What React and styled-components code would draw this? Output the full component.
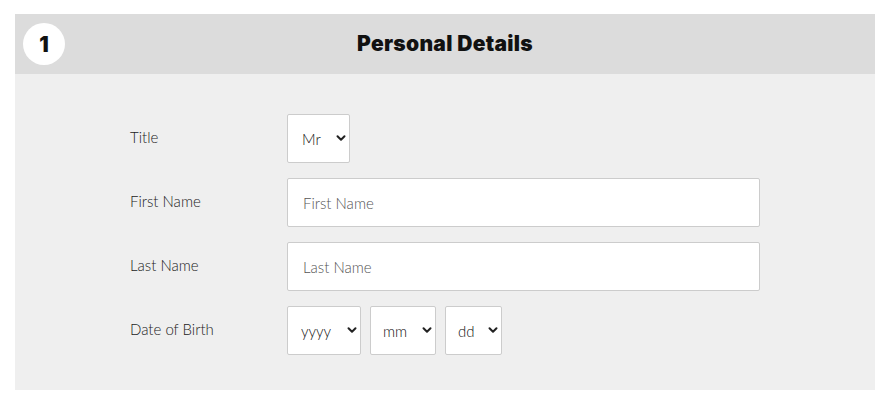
import React from "react"
import styled, { createGlobalStyle } from "styled-components"

const GlobalStyle = createGlobalStyle`
  body {
    margin: 0;
    background: #fff;
    font-family: "Lato", "Open Sans", sans-serif;
  }
`

const Page = styled.div`
  padding: 14px 15px 0;
`

const Section = styled.section`
  width: 860px;
  background-color: #efefef;
`

const Header = styled.header`
  position: relative;
  height: 60px;
  background-color: #dcdcdc;
  display: flex;
  align-items: center;
  justify-content: center;
`

const Step = styled.span`
  position: absolute;
  left: 8px;
  top: 9px;
  width: 42px;
  height: 42px;
  border-radius: 50%;
  background: #fff;
  display: flex;
  align-items: center;
  justify-content: center;
  font-family: "Inter", sans-serif;
  font-size: 21px;
  font-weight: 900;
  color: #111;
`

const Heading = styled.h2`
  margin: 0 0 1px;
  font-family: "Inter", sans-serif;
  font-size: 21px;
  font-weight: 900;
  color: #111;
  letter-spacing: 0.3px;
`

const Body = styled.div`
  padding: 40px 0 35px 115px;
  display: flex;
  flex-direction: column;
  gap: 15px;
`

const Row = styled.div`
  display: flex;
  align-items: center;
  height: 49px;
`

const Label = styled.label`
  width: 157px;
  font-size: 15px;
  font-weight: 300;
  color: #222;
  margin-top: -4px;
`

const Controls = styled.div`
  display: flex;
  gap: 9px;
`

const TextInput = styled.input`
  box-sizing: border-box;
  width: 473px;
  height: 49px;
  padding: 0 15px;
  border: 1px solid #cccccc;
  border-radius: 2px;
  background: #fff;
  font-family: "Lato", sans-serif;
  font-weight: 300;
  font-size: 15px;
  color: #222;
  outline: none;

  &::placeholder {
    color: #555;
  }
`

const SelectWrap = styled.div`
  position: relative;
  width: ${(p) => p.$width}px;
  height: 49px;
`

const Select = styled.select`
  appearance: none;
  box-sizing: border-box;
  width: 100%;
  height: 100%;
  padding: 0 0 0 ${(p) => p.$pad}px;
  border: 1px solid #cccccc;
  border-radius: 2px;
  background: #fff;
  font-family: "Lato", sans-serif;
  font-weight: 300;
  font-size: 15px;
  color: #111;
  outline: none;
`

const Chevron = styled.svg`
  position: absolute;
  right: 4px;
  top: 19px;
  width: 10px;
  height: 10px;
  pointer-events: none;
`

const Dropdown = ({ width, pad, options }) => (
  <SelectWrap $width={width}>
    <Select $pad={pad}>
      {options.map((o) => (
        <option key={o}>{o}</option>
      ))}
    </Select>
    <Chevron viewBox="0 0 10 10">
      <path
        d="M1.5 3.2 L5 6.7 L8.5 3.2"
        fill="none"
        stroke="#222"
        strokeWidth="2"
        strokeLinecap="round"
        strokeLinejoin="round"
      />
    </Chevron>
  </SelectWrap>
)

const App = () => (
  <>
    <GlobalStyle />
    <Page>
      <Section>
        <Header>
          <Step>1</Step>
          <Heading>Personal Details</Heading>
        </Header>
        <Body>
          <Row>
            <Label>Title</Label>
            <Controls>
              <Dropdown width={63} pad={14} options={["Mr", "Mrs", "Ms", "Dr"]} />
            </Controls>
          </Row>
          <Row>
            <Label>First Name</Label>
            <TextInput placeholder="First Name" />
          </Row>
          <Row>
            <Label>Last Name</Label>
            <TextInput placeholder="Last Name" />
          </Row>
          <Row>
            <Label>Date of Birth</Label>
            <Controls>
              <Dropdown width={74} pad={13} options={["yyyy"]} />
              <Dropdown width={66} pad={12} options={["mm"]} />
              <Dropdown width={57} pad={12} options={["dd"]} />
            </Controls>
          </Row>
        </Body>
      </Section>
    </Page>
  </>
)

export default App
